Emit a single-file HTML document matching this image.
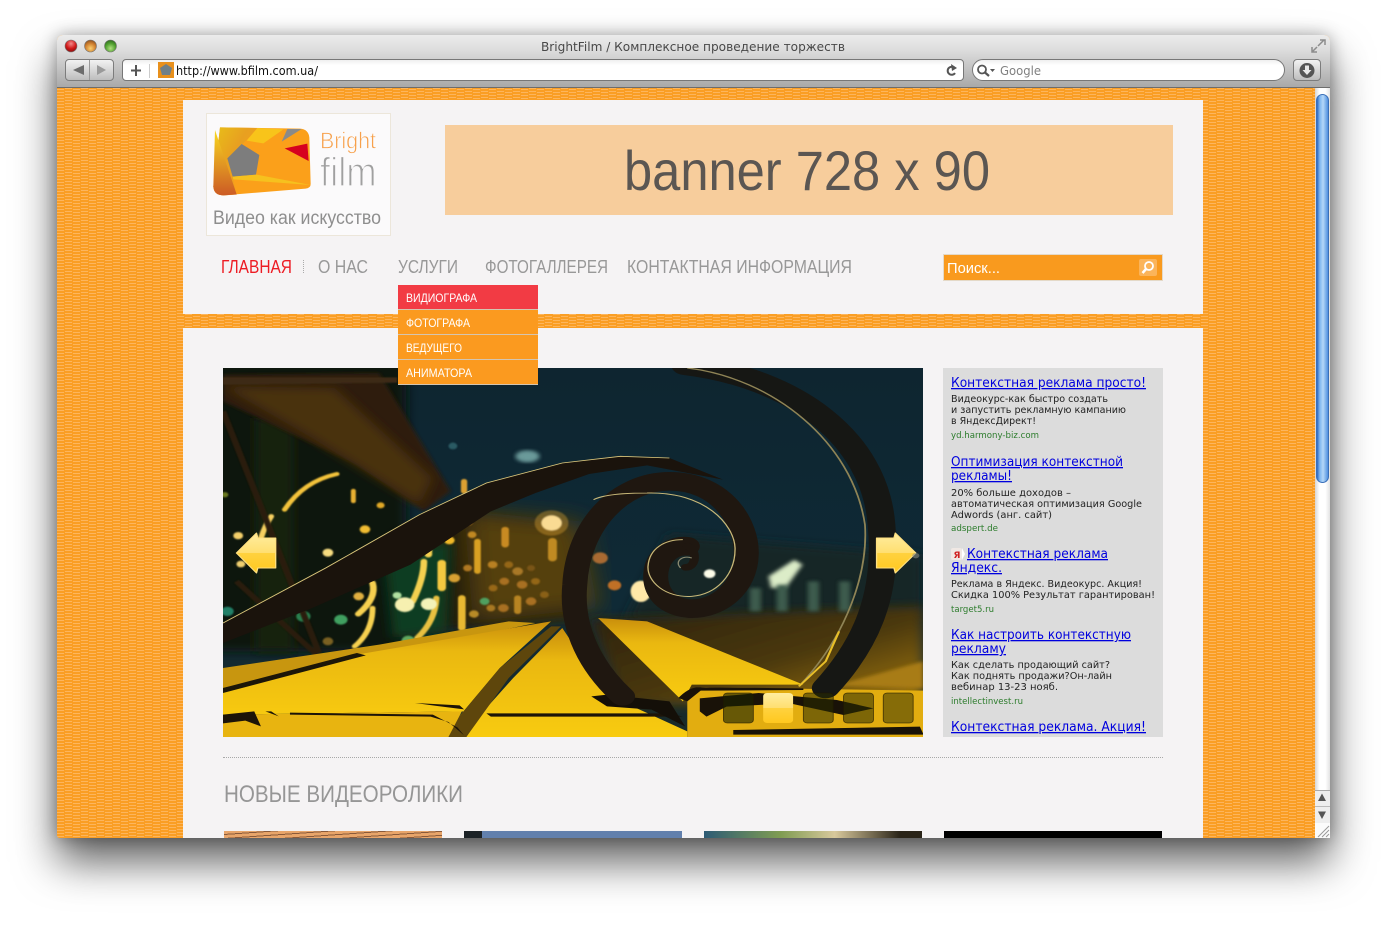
<!DOCTYPE html>
<html lang="ru"><head><meta charset="utf-8"><title>BrightFilm</title>
<style>
html,body{margin:0;padding:0;background:#fff;width:1386px;height:939px;overflow:hidden}
#shadow{position:absolute;left:57px;top:35px;width:1273px;height:803px;border-radius:6px 6px 3px 3px;box-shadow:0 24px 42px rgba(0,0,0,.62),0 0 16px rgba(0,0,0,.3)}
#win{position:absolute;left:57px;top:35px;width:1273px;height:803px;border-radius:6px 6px 3px 3px;overflow:hidden;background:#fa9d22}
#bar{position:absolute;left:0;top:0;width:1273px;height:53px;background:linear-gradient(#ececec,#dcdcdc 30%,#a9a9a9);border-bottom:1px solid #6d6d6d;box-sizing:border-box}
#org{position:absolute;left:0;top:53px}
.p{position:absolute;background:#f5f3f4}
.btn{position:absolute;box-sizing:border-box;border:1px solid #7c7c7c;background:linear-gradient(#f2f2f2,#bdbdbd);border-radius:4px}
.field{position:absolute;box-sizing:border-box;border:1px solid #777;background:linear-gradient(#efefef,#fff 25%);}
.sb{position:absolute;left:1258px;top:53px;width:15px;height:750px;background:linear-gradient(90deg,#d6d6d6,#fff 30%,#fff 70%,#e2e2e2)}
.thumb{position:absolute;left:1259px;top:59px;width:13px;height:389px;box-sizing:border-box;border:1px solid #3a6fb8;border-radius:7px;background:linear-gradient(90deg,#2a67c4,#7db5f0 25%,#b4d7f8 55%,#4f8fdf 100%)}
#drop{position:absolute;left:398px;top:285px;width:140px;height:100px;background:#fb9a1f;z-index:3}
#drop div{height:24px;border-bottom:1px solid #d4c5b0}
#drop div:first-child{background:#f23b44}
#ad{position:absolute;left:943px;top:368px;width:220px;height:369px;background:#dcdcdc}
#ov{position:absolute;left:0;top:0;z-index:5}
.t{position:absolute;height:7px;top:831px;width:218px}
</style></head><body>
<div id="shadow"></div>
<div id="win">
 <div id="bar"></div>
 <svg id="org" width="1258" height="750"><defs><pattern id="brick" width="16" height="6" patternUnits="userSpaceOnUse"><rect width="16" height="6" fill="#fa9e24"/><rect x="0" y="1" width="7" height="1" fill="#fdb55c"/><rect x="8" y="0" width="7" height="1" fill="#fdb55c"/><rect x="0" y="4" width="7" height="1" fill="#fdb55c"/><rect x="8" y="3" width="7" height="1" fill="#fdb55c"/></pattern></defs><rect width="1258" height="750" fill="url(#brick)"/></svg>
 <div class="btn" style="left:8px;top:24px;width:49px;height:22px"></div>
 <div class="field" style="left:65px;top:24px;width:842px;height:22px;border-radius:4px"></div>
 <div class="field" style="left:915px;top:24px;width:313px;height:22px;border-radius:11px"></div>
 <div class="btn" style="left:1236px;top:24px;width:28px;height:22px"></div>
 <div class="sb"></div><div class="thumb"></div>
</div>
<div class="p" style="left:183px;top:100px;width:1020px;height:214px"></div>
<div class="p" style="left:183px;top:328px;width:1020px;height:510px"></div>
<div style="position:absolute;left:206px;top:113px;width:183px;height:121px;background:#fbfafb;border:1px solid #ece6da"></div>
<div style="position:absolute;left:445px;top:125px;width:728px;height:90px;background:#f7cd9c"></div>
<div style="position:absolute;left:943px;top:254px;width:218px;height:25px;background:#f99a1e;border:1px solid #e4d9c8"></div>
<div style="position:absolute;left:1139px;top:259px;width:18px;height:17px;background:#fbb45a;border-radius:2px"></div>
<div id="drop"><div></div><div></div><div></div><div></div></div>
<div id="ad"></div>
<div style="position:absolute;left:223px;top:757px;width:940px;border-top:1px dotted #a8a8a8"></div>
<div class="t" style="left:224px;background:repeating-linear-gradient(176deg,#e8a56a 0 3px,#8a5a3a 3px 4px)"></div>
<div class="t" style="left:464px;background:linear-gradient(90deg,#1c2226 0 18px,#6280ad 18px)"></div>
<div class="t" style="left:704px;background:linear-gradient(90deg,#2d5b75,#7f9c52 35%,#d8c89c 60%,#2a2418 90%)"></div>
<div class="t" style="left:944px;background:#000"></div>

<svg style="position:absolute;left:223px;top:368px" width="700" height="369" viewBox="0 0 1568 1107" preserveAspectRatio="none">
<defs>
<linearGradient id="sky" x1="0" y1="0" x2="0" y2="1"><stop offset="0" stop-color="#0e2530"/><stop offset=".65" stop-color="#0f2a36"/><stop offset="1" stop-color="#1a2a28"/></linearGradient>
<linearGradient id="ground" x1="0" y1="0" x2="1" y2="1"><stop offset="0" stop-color="#2a200c"/><stop offset=".55" stop-color="#4a3810"/><stop offset="1" stop-color="#a87c12"/></linearGradient>
<linearGradient id="pl" x1="0" y1="0" x2="0" y2="1"><stop offset="0" stop-color="#c88e0c"/><stop offset=".3" stop-color="#eab810"/><stop offset="1" stop-color="#f8cb10"/></linearGradient>
<linearGradient id="arr" x1="0" y1="0" x2="0" y2="1"><stop offset="0" stop-color="#ffedA0"/><stop offset=".5" stop-color="#ffdf70"/><stop offset=".5" stop-color="#ffd23f"/><stop offset="1" stop-color="#ffc81f"/></linearGradient>
<filter id="b2"><feGaussianBlur stdDeviation="2"/></filter>
<filter id="b5"><feGaussianBlur stdDeviation="5"/></filter>
<filter id="b14"><feGaussianBlur stdDeviation="14"/></filter>
<filter id="b30"><feGaussianBlur stdDeviation="30"/></filter>
<clipPath id="cp"><rect width="1568" height="1107"/></clipPath>
</defs>
<g clip-path="url(#cp)">
<rect width="1568" height="1107" fill="url(#sky)"/>
<rect x="-30" y="-30" width="440" height="880" fill="#0b1410" filter="url(#b14)"/>
<rect x="70" y="150" width="90" height="700" fill="#14200f" filter="url(#b14)"/>
<path d="M0 20L350 15L510 370L450 430L300 290L0 100Z" fill="#2e1e0c" filter="url(#b5)"/>
<path d="M0 55L250 60 470 330 440 410 200 210Z" fill="#4a3010" filter="url(#b14)"/>
<path d="M0 28H390V44L0 50Z" fill="#3c2c14" filter="url(#b2)"/>
<path d="M380 500L560 440 760 480 800 750 400 800Z" fill="#241c0e" filter="url(#b14)"/>
<path d="M540 430L800 460 840 720 560 760Z" fill="#54400f" filter="url(#b30)"/>
<path d="M360 560L510 520 500 790 380 810Z" fill="#0c3c22" filter="url(#b14)"/>
<path d="M1000 500L1568 560 1568 760 900 760Z" fill="#182728" filter="url(#b14)"/>
<path d="M820 755L1568 715V1010H900Z" fill="url(#ground)" filter="url(#b14)"/>
<!-- bokeh -->
<g fill="none" stroke-linecap="round" filter="url(#b2)">
<path d="M138 425Q180 340 255 318" stroke="#f3c23a" stroke-width="12"/>
<path d="M85 510Q95 470 108 445" stroke="#f6d060" stroke-width="13"/>
<path d="M292 368V400" stroke="#e8b030" stroke-width="11"/>
<path d="M303 738Q345 690 335 645" stroke="#f6d050" stroke-width="15"/>
<path d="M295 835Q335 790 335 720" stroke="#f6d050" stroke-width="13"/>
<path d="M425 700Q450 630 450 580" stroke="#f4d050" stroke-width="15"/>
<path d="M435 810Q475 760 478 690" stroke="#e8c040" stroke-width="14"/>
<path d="M460 510V560" stroke="#f6d050" stroke-width="17"/>
<path d="M490 585V660" stroke="#f4c840" stroke-width="19"/>
<path d="M535 690V780" stroke="#e8b830" stroke-width="17"/>
<path d="M570 520V610" stroke="#d8a020" stroke-width="15"/>
<path d="M632 485V530" stroke="#c88a20" stroke-width="17"/>
<path d="M738 520V570" stroke="#c08a20" stroke-width="20"/>
<path d="M540 340V370" stroke="#dca030" stroke-width="14"/>
<path d="M660 690V730" stroke="#b88420" stroke-width="16"/>
</g>
<g filter="url(#b2)">
<circle cx="736" cy="465" r="23" fill="#fff3c8"/><circle cx="736" cy="465" r="38" fill="#f0b030" opacity=".35"/>
<circle cx="34" cy="503" r="11" fill="#f3cf6a"/><circle cx="235" cy="554" r="12" fill="#f6dc80"/><circle cx="318" cy="484" r="12" fill="#f0bc30"/>
<circle cx="353" cy="412" r="9" fill="#e0a825"/><circle cx="507" cy="517" r="12" fill="#f0b828"/><circle cx="304" cy="685" r="12" fill="#e0b040"/>
<circle cx="366" cy="593" r="10" fill="#f6d878"/><circle cx="384" cy="576" r="9" fill="#e6b030"/><circle cx="407" cy="710" r="22" fill="#f6f0b0"/>
<circle cx="461" cy="708" r="18" fill="#f3f2b8"/><circle cx="264" cy="755" r="15" fill="#3fa060"/><circle cx="180" cy="745" r="16" fill="#2a8050"/>
<circle cx="10" cy="730" r="14" fill="#208068"/><circle cx="586" cy="700" r="11" fill="#4fa060"/><circle cx="518" cy="630" r="13" fill="#d8a030"/>
<circle cx="604" cy="590" r="11" fill="#b88020"/><circle cx="548" cy="600" r="10" fill="#b07820"/><circle cx="558" cy="500" r="10" fill="#c08820"/><circle cx="550" cy="462" r="10" fill="#a87018"/>
<circle cx="670" cy="650" r="12" fill="#a87020"/><circle cx="630" cy="640" r="11" fill="#a87020"/><circle cx="690" cy="700" r="12" fill="#a87020"/><circle cx="628" cy="720" r="12" fill="#a87020"/><circle cx="660" cy="610" r="12" fill="#a87828"/><circle cx="605" cy="660" r="10" fill="#986818"/><circle cx="562" cy="738" r="11" fill="#b88a28"/>
<circle cx="700" cy="640" r="10" fill="#946618"/><circle cx="640" cy="590" r="10" fill="#946618"/><circle cx="720" cy="680" r="10" fill="#8a6018"/><circle cx="600" cy="720" r="10" fill="#a87820"/><circle cx="690" cy="600" r="9" fill="#7a5414"/>
<circle cx="4" cy="380" r="8" fill="#6a7a20"/><circle cx="40" cy="588" r="10" fill="#f0cf70"/><circle cx="415" cy="818" r="15" fill="#60a860"/><circle cx="235" cy="820" r="12" fill="#7a6020"/>
<circle cx="390" cy="682" r="10" fill="#b0e0a0"/><circle cx="515" cy="234" r="10" fill="#2a5a64"/>
<ellipse cx="682" cy="265" rx="27" ry="18" fill="#6a9a9a" filter="url(#b5)"/>
<circle cx="845" cy="570" r="17" fill="#a86a30"/><circle cx="877" cy="652" r="15" fill="#c07028"/><ellipse cx="936" cy="670" rx="23" ry="32" fill="#ffe8a8"/>
<path d="M1222 625L1280 575 1298 590 1260 660 1228 660Z" fill="#dcecc8" filter="url(#b5)"/>
<circle cx="1090" cy="617" r="13" fill="#fbfbe8"/>
<g fill="#3e5c4e" filter="url(#b5)"><rect x="1180" y="660" width="25" height="70"/><rect x="1240" y="650" width="25" height="80"/><rect x="1310" y="640" width="25" height="90"/><rect x="1380" y="640" width="25" height="90"/></g>
</g>
<!-- struts -->
<path d="M0 130L215 855M30 640L210 860" stroke="#2a1d0a" stroke-width="14" fill="none" filter="url(#b2)"/>
<!-- planks -->
<path d="M0 900L350 830 640 760 700 765 300 880 0 960Z" fill="#c8960f"/>
<path d="M0 970L300 860 735 760 620 900 520 1060 540 1030 0 1040Z" fill="url(#pl)"/>
<path d="M0 960L300 855 320 862 0 975Z" fill="#1c1608"/>
<path d="M760 780L860 980 1040 1090V1107H545L580 1035 650 930Z" fill="url(#pl)"/>
<path d="M735 775L757 775 640 930 545 1107H505L520 1060 620 900Z" fill="#5e460c"/>
<path d="M840 750L950 760 1300 950 1050 950 1030 1000Z" fill="url(#pl)"/>
<path d="M0 1040L535 1030 505 1107H0Z" fill="#e8b410"/>
<path d="M1040 990Q1040 955 1090 958L1568 968V1107H1040Z" fill="#e2ad10"/>
<path d="M1290 950L1380 950 1568 880V960Z" fill="#a87c14" filter="url(#b5)"/>
<path d="M0 1040L70 1030 85 1075 50 1058 0 1066ZM95 1030L125 1045 108 1030ZM150 1034L470 1040 525 1078 540 1102 505 1062 465 1046 150 1040ZM590 1036H1000L1030 1046H600ZM430 1005L530 1012 540 1024 480 1014Z" fill="#1c1408"/>
<path d="M1068 991L1200 975 1375 996 1457 1021 1390 1041 1270 1006 1128 1016 1083 1046 1068 1030ZM1020 990Q1040 962 1060 958L1300 961 1300 966 1070 968 1040 1000Z" fill="#191208"/>
<path d="M1143 1100V1086L1561 1076 1568 1096V1100Z" fill="#191208"/>
<path d="M825 985L860 980 1000 1000 1035 1075 960 1025 860 1015Z" fill="#140f08"/>
<!-- rail -->
<path d="M0 765L230 600 440 440 590 345 760 285 890 265 1000 270 1120 335 950 292 820 318 700 375 600 430 420 590 200 720 0 825Z" fill="#1a130c"/>
<path d="M0 765L230 600 440 440 590 345 760 285 890 265 1000 270" fill="none" stroke="#dbc77c" stroke-width="2.500"/>
<!-- spiral -->
<g fill="none" stroke-linecap="round" stroke-linejoin="round">
<path d="M1035 -10C1280 30 1460 210 1475 470C1490 680 1440 830 1350 960" stroke="#161714" stroke-width="62"/>
<path d="M895 985C810 880 780 760 788 650C795 470 890 340 1000 340C1120 340 1175 470 1172 560C1170 660 1110 725 1045 722C985 715 965 660 970 610C975 560 1010 530 1040 535" stroke="#1f1710" stroke-width="56"/>
<path d="M1040 535C1062 540 1062 600 1036 598" stroke="#1f1710" stroke-width="20"/>
</g>
<g fill="none">
<path d="M1040 0C1230 30 1410 220 1438 470C1445 610 1400 800 1290 955" stroke="#8f8456" stroke-width="4"/>
<path d="M830 395Q860 375 950 375C1080 370 1145 470 1147 540C1148 620 1105 680 1050 685C990 690 950 640 952 595C955 540 990 515 1030 515" stroke="#c8b878" stroke-width="3"/>
<path d="M1025 600C1010 580 1030 560 1050 570" stroke="#8a8a70" stroke-width="3"/>
</g>
<path d="M1290 955L1350 880 1380 790" stroke="#e8be28" stroke-width="5" fill="none"/>
<!-- arrows -->
<path d="M30 555L75 495 78 510H118V600H78L75 615Z" fill="url(#arr)" stroke="#ffe080" stroke-width="3" stroke-linejoin="round"/>
<path d="M1464 510H1503L1506 495 1552 555 1506 615 1503 600H1464Z" fill="url(#arr)" stroke="#ffe080" stroke-width="3" stroke-linejoin="round"/>
<circle cx="1552" cy="563" r="8" fill="#8a8a80" opacity=".6"/>
<!-- pager -->
<g stroke="#201800" stroke-opacity=".7" stroke-width="2">
<rect x="1121" y="975" width="67" height="90" rx="9" fill="#1c2400" fill-opacity=".62"/>
<rect x="1300" y="975" width="67" height="90" rx="9" fill="#2a2c00" fill-opacity=".55"/>
<rect x="1390" y="975" width="67" height="90" rx="9" fill="#2a2c00" fill-opacity=".55"/>
<rect x="1479" y="975" width="67" height="90" rx="9" fill="#2a2c00" fill-opacity=".5"/>
</g>
<rect x="1210" y="975" width="67" height="90" rx="9" fill="url(#arr)"/>
</g>
</svg>

<svg id="ov" width="1386" height="939" viewBox="0 0 1386 939">
<defs>
<linearGradient id="lg" x1="0" y1="0" x2="1" y2="1"><stop offset="0" stop-color="#e8c018"/><stop offset=".4" stop-color="#e8a020"/><stop offset="1" stop-color="#fb9d1a"/></linearGradient>
<linearGradient id="lg2" x1="0" y1="0" x2="0" y2="1"><stop offset="0" stop-color="#f8d820"/><stop offset="1" stop-color="#cc5a25"/></linearGradient>
<radialGradient id="r" cx=".5" cy=".3" r=".7"><stop offset="0" stop-color="#f28a8a"/><stop offset=".6" stop-color="#d01818"/><stop offset="1" stop-color="#8a1010"/></radialGradient>
<radialGradient id="y" cx=".5" cy=".7" r=".7"><stop offset="0" stop-color="#fbd070"/><stop offset=".6" stop-color="#d08030"/><stop offset="1" stop-color="#8a5020"/></radialGradient>
<radialGradient id="g" cx=".5" cy=".7" r=".7"><stop offset="0" stop-color="#b0e080"/><stop offset=".6" stop-color="#50a030"/><stop offset="1" stop-color="#306820"/></radialGradient>
</defs>
<g stroke="#777" stroke-width=".6"><circle cx="71" cy="46" r="6" fill="url(#r)"/><circle cx="90.500" cy="46" r="6" fill="url(#y)"/><circle cx="110.500" cy="46" r="6" fill="url(#g)"/></g>
<g font-family="'DejaVu Sans','Liberation Sans',sans-serif">
<text x="541" y="51" font-size="12" fill="#484848" textLength="304" lengthAdjust="spacingAndGlyphs">BrightFilm / Комплексное проведение торжеств</text>
<text x="176" y="75" font-size="12" fill="#111" textLength="142" lengthAdjust="spacingAndGlyphs">http://www.bfilm.com.ua/</text>
<text x="1000" y="75" font-size="12" fill="#808080" textLength="41" lengthAdjust="spacingAndGlyphs">Google</text>
</g>
<path d="M84 65V75L73 70Z" fill="#6c6c6c"/><path d="M97 65V75L106 70Z" fill="#9a9a9a"/>
<path d="M89.500 60V80" stroke="#999"/>
<path d="M136 65V76M131 70.500H141" stroke="#555" stroke-width="2"/>
<path d="M149.500 64V78" stroke="#ccc"/>
<rect x="158" y="62" width="16" height="16" fill="#e8901c"/><path d="M166 64L172 68 170 75H162L160 68Z" fill="#6f7f88"/>
<path d="M955 68.500A4 4 0 1 0 955 73" fill="none" stroke="#555" stroke-width="2"/><path d="M951 64L957 68 952 71Z" fill="#555"/>
<circle cx="982" cy="69.500" r="4" fill="none" stroke="#555" stroke-width="1.800"/><path d="M985 72.500L989 76" stroke="#555" stroke-width="2.200"/><path d="M990 69H995L992.500 72Z" fill="#555"/>
<circle cx="1307" cy="70.500" r="7.500" fill="#555"/><path d="M1305 65.500H1309V70H1311.500L1307 75 1302.500 70H1305Z" fill="#e8e8e8"/>
<path d="M1312 52L1317 47M1318 46L1324 40M1320 40H1325V45M1312 47V52H1317" stroke="#8c8c8c" stroke-width="1.500" fill="none"/>

<!-- logo -->
<g transform="translate(50 30) scale(.33333)">
<path d="M510 292L750 296Q775 298 778 322L782 462Q782 474 767 476L520 496Q492 496 490 470Z" fill="#fba01a"/>
<path d="M510 292L622 294 590 330 532 385 548 440 560 494 520 496Q492 496 490 470Z" fill="url(#lg)"/>
<path d="M495 300L560 493 520 496Q492 496 490 470Z" fill="url(#lg2)"/>
<path d="M622 294L700 298 640 340 590 332Z" fill="#f8c41a"/>
<path d="M712 297L755 297 695 335Z" fill="#8a8a8a"/>
<path d="M704 355L772 341 776 393Z" fill="#d6001f"/>
<path d="M575 342L628 375 618 434 548 440 532 385Z" fill="#7d7d7d"/>
<path d="M548 440L620 434 782 465 550 448Z" fill="#f6c11e"/>
<text x="810" y="355" font-family="'Liberation Sans',sans-serif" font-size="70" fill="#f7a04a" stroke="#fbfafb" stroke-width="2" textLength="168" lengthAdjust="spacingAndGlyphs">Bright</text>
<text x="810" y="468" font-family="'Liberation Sans',sans-serif" font-size="122" fill="#a0a0a0" stroke="#fbfafb" stroke-width="4" textLength="170" lengthAdjust="spacingAndGlyphs">film</text>
</g>
<g font-family="'Liberation Sans','DejaVu Sans',sans-serif">
<text x="213" y="224" font-size="19" fill="#8e8e8e" textLength="168" lengthAdjust="spacingAndGlyphs">Видео как искусство</text>
<text x="624" y="190" font-size="56" fill="#5b5652" textLength="366" lengthAdjust="spacingAndGlyphs">banner 728 x 90</text>
<g font-size="18" fill="#989898">
<text x="221" y="273" fill="#ed1c24" textLength="71" lengthAdjust="spacingAndGlyphs">ГЛАВНАЯ</text>
<text x="318" y="273" textLength="50" lengthAdjust="spacingAndGlyphs">О НАС</text>
<text x="398" y="273" textLength="60" lengthAdjust="spacingAndGlyphs">УСЛУГИ</text>
<text x="485" y="273" textLength="123" lengthAdjust="spacingAndGlyphs">ФОТОГАЛЛЕРЕЯ</text>
<text x="627" y="273" textLength="225" lengthAdjust="spacingAndGlyphs">КОНТАКТНАЯ ИНФОРМАЦИЯ</text>
</g>
<path d="M303.500 260V273" stroke="#aaa" stroke-dasharray="1 1"/>
<text x="947" y="273" font-size="15" fill="#fff" textLength="53" lengthAdjust="spacingAndGlyphs">Поиск...</text>
<circle cx="1149" cy="266" r="4" fill="none" stroke="#fff" stroke-width="1.800"/><path d="M1146 269L1142.500 273" stroke="#fff" stroke-width="2.500"/>
<g font-size="12" fill="#fff">
<text x="406" y="302" textLength="71" lengthAdjust="spacingAndGlyphs">ВИДИОГРАФА</text>
<text x="406" y="327" textLength="64" lengthAdjust="spacingAndGlyphs">ФОТОГРАФА</text>
<text x="406" y="352" textLength="56" lengthAdjust="spacingAndGlyphs">ВЕДУЩЕГО</text>
<text x="406" y="377" textLength="66" lengthAdjust="spacingAndGlyphs">АНИМАТОРА</text>
</g>
<text x="224" y="802" font-size="24" fill="#969696" textLength="239" lengthAdjust="spacingAndGlyphs">НОВЫЕ ВИДЕОРОЛИКИ</text>
</g>
<g font-family="'DejaVu Sans','Liberation Sans',sans-serif">
<g font-size="13" fill="#0000de" text-decoration="underline">
<text x="951" y="387" textLength="195" lengthAdjust="spacingAndGlyphs">Контекстная реклама просто!</text>
<text x="951" y="466" textLength="172" lengthAdjust="spacingAndGlyphs">Оптимизация контекстной</text>
<text x="951" y="480" textLength="61" lengthAdjust="spacingAndGlyphs">рекламы!</text>
<text x="967" y="558" textLength="141" lengthAdjust="spacingAndGlyphs">Контекстная реклама</text>
<text x="951" y="572" textLength="51" lengthAdjust="spacingAndGlyphs">Яндекс.</text>
<text x="951" y="639" textLength="180" lengthAdjust="spacingAndGlyphs">Как настроить контекстную</text>
<text x="951" y="653" textLength="55" lengthAdjust="spacingAndGlyphs">рекламу</text>
<text x="951" y="731" textLength="195" lengthAdjust="spacingAndGlyphs">Контекстная реклама. Акция!</text>
</g>
<g font-size="10" fill="#222">
<text x="951" y="402" textLength="157" lengthAdjust="spacingAndGlyphs">Видеокурс-как быстро создать</text>
<text x="951" y="413" textLength="175" lengthAdjust="spacingAndGlyphs">и запустить рекламную кампанию</text>
<text x="951" y="424" textLength="85" lengthAdjust="spacingAndGlyphs">в ЯндексДирект!</text>
<text x="951" y="496" textLength="120" lengthAdjust="spacingAndGlyphs">20% больше доходов –</text>
<text x="951" y="507" textLength="191" lengthAdjust="spacingAndGlyphs">автоматическая оптимизация Google</text>
<text x="951" y="518" textLength="101" lengthAdjust="spacingAndGlyphs">Adwords (анг. сайт)</text>
<text x="951" y="587" textLength="191" lengthAdjust="spacingAndGlyphs">Реклама в Яндекс. Видеокурс. Акция!</text>
<text x="951" y="598" textLength="204" lengthAdjust="spacingAndGlyphs">Скидка 100% Результат гарантирован!</text>
<text x="951" y="668" textLength="159" lengthAdjust="spacingAndGlyphs">Как сделать продающий сайт?</text>
<text x="951" y="679" textLength="161" lengthAdjust="spacingAndGlyphs">Как поднять продажи?Он-лайн</text>
<text x="951" y="690" textLength="107" lengthAdjust="spacingAndGlyphs">вебинар 13-23 нояб.</text>
</g>
<g font-size="8.500" fill="#2c7c2c">
<text x="951" y="438" textLength="88" lengthAdjust="spacingAndGlyphs">yd.harmony-biz.com</text>
<text x="951" y="531" textLength="47" lengthAdjust="spacingAndGlyphs">adspert.de</text>
<text x="951" y="612" textLength="43" lengthAdjust="spacingAndGlyphs">target5.ru</text>
<text x="951" y="704" textLength="72" lengthAdjust="spacingAndGlyphs">intellectinvest.ru</text>
</g>
</g>
<rect x="951" y="548" width="11" height="12" rx="2" fill="#f0e8e4"/>
<text x="953.500" y="558" font-family="'DejaVu Sans',sans-serif" font-size="9" font-weight="bold" fill="#d02020">Я</text>
<path d="M962 548L965 554 962 560Z" fill="#fff"/>
<!-- scrollbar end -->
<rect x="1315" y="790" width="15" height="33" fill="#eee"/>
<path d="M1315 806.500H1330" stroke="#bbb"/><path d="M1315 790.500H1330" stroke="#aaa"/>
<path d="M1322 793.500L1326 801H1318Z" fill="#555"/><path d="M1322 819L1326 811.500H1318Z" fill="#555"/>
<rect x="1315" y="823" width="15" height="15" fill="#fbfbfb"/>
<path d="M1318 837L1329 826M1322 837L1329 830M1326 837L1329 834" stroke="#999"/>
</svg>
</body></html>
